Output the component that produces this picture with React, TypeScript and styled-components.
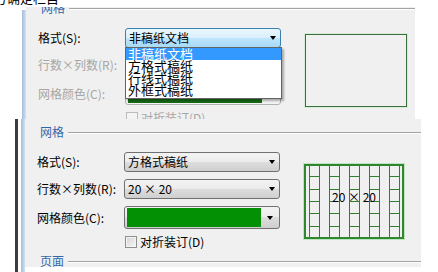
import styled, { createGlobalStyle, css } from 'styled-components';

const GlobalStyle = createGlobalStyle`
  html, body {
    margin: 0;
    padding: 0;
    background: #ffffff;
  }

  body {
    width: 438px;
    height: 272px;
    overflow: hidden;
    font-family: "Noto Sans CJK SC", "Liberation Sans", sans-serif;
    font-size: 12px;
    color: #000000;
  }
`;

type Tone = 'normal' | 'hot' | 'disabled';

const Page = styled.div`
  display: flex;
  flex-direction: column;
  width: 438px;
  height: 272px;
  overflow: hidden;
`;

const TopShot = styled.div`
  display: flex;
  flex-direction: column;
  flex-shrink: 0;
  height: 119px;
`;

const Caption = styled.div`
  height: 7px;
  overflow: hidden;
`;

const CaptionText = styled.span`
  display: block;
  margin: -9px 0 0 -6px;
  font-size: 13px;
  line-height: 13px;
  white-space: nowrap;
`;

const WindowRow = styled.div<{ $inset: number }>`
  display: flex;
  align-items: flex-start;
  flex: 1;
  padding-left: ${(p) => p.$inset}px;
`;

const DarkEdge = styled.div`
  align-self: stretch;
  width: 3px;
  margin-right: 3px;
  background: #3c3c3c;
`;

const BlueEdge = styled.div<{ $top?: number }>`
  align-self: stretch;
  width: 4px;
  margin-top: ${(p) => p.$top ?? 0}px;
  background: linear-gradient(to right, #a3bddc, #d2e0f1);
`;

const Panel = styled.div<{ $width: number; $height: number }>`
  width: ${(p) => p.$width}px;
  height: ${(p) => p.$height}px;
  background: #f0f0f0;
  overflow: hidden;
`;

const Section = styled.div<{ $shift: number }>`
  display: flex;
  flex-direction: column;
  margin-top: ${(p) => p.$shift}px;
`;

const GroupHeader = styled.div`
  display: flex;
  align-items: center;
  gap: 4px;
  height: 12px;
  margin-top: 7px;
  padding-left: 15px;
`;

const GroupTitle = styled.span`
  color: #3467a9;
  line-height: 12px;
  white-space: nowrap;
`;

const GroupLine = styled.div`
  flex: 1;
  height: 1px;
  background: #a3a3a3;
  box-shadow: 0 1px 0 #ffffff;
`;

const Body = styled.div`
  display: flex;
  align-items: flex-start;
  margin-top: 14px;
  padding-left: 12px;
`;

const Form = styled.div`
  display: grid;
  grid-template-columns: 87px 156px;
  grid-template-rows: 20px 20px 23px 12px;
  row-gap: 7px;
  align-items: center;
`;

const FieldLabel = styled.span<{ $disabled?: boolean }>`
  line-height: 12px;
  white-space: nowrap;
  color: ${(p) => (p.$disabled ? '#a6a6a6' : '#000000')};
`;

const toneStyles = {
  normal: css`
    border-color: #707070;
    background: linear-gradient(#f3f3f3 0%, #ebebeb 49%, #dddddd 50%, #cfcfcf 100%);
  `,
  hot: css`
    border-color: #3c7fb1;
    background: linear-gradient(#eaf6fd 0%, #d9f0fc 49%, #bee6fd 50%, #a7d9f5 100%);
  `,
  disabled: css`
    border-color: #adb2b5;
    background: #f4f4f4;
    color: #a6a6a6;
  `,
};

const ComboBox = styled.div<{ $tone: Tone; $swatch?: boolean }>`
  position: relative;
  display: flex;
  align-items: center;
  box-sizing: border-box;
  height: 100%;
  padding: ${(p) => (p.$swatch ? '1px 0 1px 2px' : '0 0 0 3px')};
  border: 1px solid;
  border-radius: 3px;
  ${(p) => toneStyles[p.$tone]}
`;

const ComboText = styled.span`
  flex: 1;
  line-height: 18px;
  white-space: nowrap;
`;

const Arrow = styled.span`
  width: 0;
  height: 0;
  margin-right: 4px;
  border-left: 3.5px solid transparent;
  border-right: 3.5px solid transparent;
  border-top: 4px solid #000000;
`;

const ArrowZone = styled.div`
  display: flex;
  align-items: center;
  justify-content: center;
  width: 18px;
  height: 100%;

  ${Arrow} {
    margin-right: 0;
  }
`;

const Swatch = styled.div<{ $disabled?: boolean }>`
  flex: 1;
  height: 100%;
  background: ${(p) => (p.$disabled ? '#166c16' : '#049004')};
`;

const DropList = styled.ul`
  position: absolute;
  top: 100%;
  left: -1px;
  z-index: 2;
  box-sizing: border-box;
  width: 157px;
  margin: 0;
  padding: 0 0 2px;
  list-style: none;
  border: 1px solid #646464;
  background: #ffffff;
  box-shadow: 2px 2px 2px rgba(0, 0, 0, 0.3);
`;

const DropItem = styled.li<{ $active?: boolean }>`
  height: 12px;
  padding-left: 2px;
  font-size: 13px;
  line-height: 12px;
  white-space: nowrap;
  color: ${(p) => (p.$active ? '#ffffff' : '#000000')};
  background: ${(p) => (p.$active ? '#3399ff' : 'transparent')};
`;

const CheckRow = styled.label`
  grid-column: 2;
  display: flex;
  align-items: center;
  gap: 3px;
  height: 12px;
  padding-left: 1px;
`;

const CheckBox = styled.span<{ $disabled?: boolean }>`
  box-sizing: border-box;
  width: 12px;
  height: 12px;
  border: 1px solid ${(p) => (p.$disabled ? '#bcbcbc' : '#8e8f8f')};
  background: ${(p) =>
    p.$disabled ? '#f4f4f4' : 'linear-gradient(135deg, #d4d4d4, #f7f7f7)'};
  box-shadow: inset 0 0 0 1px #f4f4f4;
`;

const CheckText = styled.span<{ $disabled?: boolean }>`
  line-height: 12px;
  white-space: nowrap;
  color: ${(p) => (p.$disabled ? '#a6a6a6' : '#000000')};
`;

const Preview = styled.div<{ $grid?: boolean }>`
  position: relative;
  flex-shrink: 0;
  box-sizing: border-box;
  width: ${(p) => (p.$grid ? 100 : 102)}px;
  height: ${(p) => (p.$grid ? 75 : 73)}px;
  margin: ${(p) => (p.$grid ? '12px 0 0 24px' : '6px 0 0 24px')};
  border: ${(p) => (p.$grid ? '2px solid #2f872f' : '1px solid #3b6f3b')};
  box-shadow: 0 0 0 1px ${(p) => (p.$grid ? '#bfe2bf' : '#d6ecd6')};

  svg {
    display: block;
  }
`;

const PreviewLabel = styled.span`
  position: absolute;
  top: 25px;
  left: 0;
  right: 0;
  text-align: center;
  font-size: 12px;
  line-height: 12px;
  white-space: nowrap;
`;

const cellCols = [3, 23, 43, 63, 83];
const cellRows = [10, 23, 35, 47, 60];

function PaperGrid() {
  return (
    <svg width="96" height="71" viewBox="0 0 96 71">
      <g stroke="#2f7f2f" strokeWidth="1" fill="none">
        {cellCols.map((x) => (
          <g key={x}>
            <line x1={x + 0.5} y1={0} x2={x + 0.5} y2={71} />
            <line x1={x + 10.5} y1={0} x2={x + 10.5} y2={71} />
            {cellRows.map((y) => (
              <line key={y} x1={x} y1={y + 0.5} x2={x + 11} y2={y + 0.5} />
            ))}
          </g>
        ))}
      </g>
    </svg>
  );
}

const styleOptions = [
  { label: '非稿纸文档', active: true },
  { label: '方格式稿纸' },
  { label: '行线式稿纸' },
  { label: '外框式稿纸' },
];

function GridSection({ open, shift }: { open: boolean; shift: number }) {
  const tone: Tone = open ? 'disabled' : 'normal';

  return (
    <Section $shift={shift}>
      <GroupHeader>
        <GroupTitle>网格</GroupTitle>
        <GroupLine />
      </GroupHeader>
      <Body>
        <Form>
          <FieldLabel>格式(S):</FieldLabel>
          <ComboBox $tone={open ? 'hot' : 'normal'}>
            <ComboText>{open ? '非稿纸文档' : '方格式稿纸'}</ComboText>
            <Arrow />
            {open && (
              <DropList>
                {styleOptions.map((item) => (
                  <DropItem key={item.label} $active={item.active}>
                    {item.label}
                  </DropItem>
                ))}
              </DropList>
            )}
          </ComboBox>

          <FieldLabel $disabled={open}>行数×列数(R):</FieldLabel>
          <ComboBox $tone={tone}>
            <ComboText>20 × 20</ComboText>
            <Arrow />
          </ComboBox>

          <FieldLabel $disabled={open}>网格颜色(C):</FieldLabel>
          <ComboBox $tone={tone} $swatch>
            <Swatch $disabled={open} />
            <ArrowZone>
              <Arrow />
            </ArrowZone>
          </ComboBox>

          <CheckRow>
            <CheckBox $disabled={open} />
            <CheckText $disabled={open}>对折装订(D)</CheckText>
          </CheckRow>
        </Form>

        {open ? (
          <Preview />
        ) : (
          <Preview $grid>
            <PaperGrid />
            <PreviewLabel>20 × 20</PreviewLabel>
          </Preview>
        )}
      </Body>
      <GroupHeader>
        <GroupTitle>页面</GroupTitle>
        <GroupLine />
      </GroupHeader>
    </Section>
  );
}

function App() {
  return (
    <>
      <GlobalStyle />
      <Page>
        <TopShot>
          <Caption>
            <CaptionText>方确定栏目</CaptionText>
          </Caption>
          <WindowRow $inset={22}>
            <BlueEdge $top={3} />
            <Panel $width={389} $height={112}>
              <GridSection open shift={-12} />
            </Panel>
          </WindowRow>
        </TopShot>

        <WindowRow $inset={15}>
          <DarkEdge />
          <BlueEdge />
          <Panel $width={396} $height={148}>
            <GridSection open={false} shift={0} />
          </Panel>
        </WindowRow>
      </Page>
    </>
  );
}

export default App;
